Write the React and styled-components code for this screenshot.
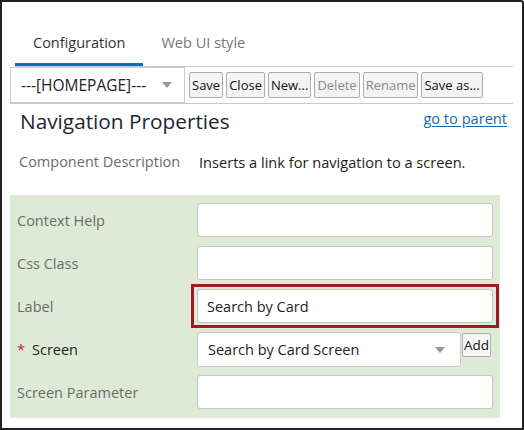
import React from 'react';
import styled, { createGlobalStyle } from 'styled-components';

const GlobalStyle = createGlobalStyle`
  html, body {
    margin: 0;
    padding: 0;
    background: #fff;
  }
  body {
    font-family: "Open Sans", "Noto Sans", sans-serif;
    color: #222;
  }
  * {
    box-sizing: border-box;
  }
`;

const Frame = styled.div`
  width: 524px;
  height: 430px;
  border: 2px solid #222;
  border-top-right-radius: 3px;
  padding: 20px 9px 0 8px;
  background: #fff;
  overflow: hidden;
`;

const TabBar = styled.div`
  display: flex;
  margin-left: 5px;
  border-bottom: 1px solid #c8c8c8;
`;

const Tab = styled.div`
  padding: 11px 18px 10px;
  line-height: 20px;
  font-size: 14.5px;
  color: ${(p) => (p.$active ? '#333' : '#777')};
  border-bottom: 3px solid ${(p) => (p.$active ? '#0a6eb4' : 'transparent')};
`;

const Toolbar = styled.div`
  display: flex;
  align-items: center;
  gap: 3px;
  height: 37px;
  border-bottom: 1px solid #c8c8c8;
`;

const Arrow = styled.span`
  width: 0;
  height: 0;
  border-left: 5px solid transparent;
  border-right: 5px solid transparent;
  border-top: 6px solid #999;
`;

const Select = styled.div`
  display: flex;
  align-items: center;
  justify-content: space-between;
  width: ${(p) => p.$width}px;
  height: ${(p) => p.$height}px;
  padding: 0 ${(p) => p.$padRight}px 0 10px;
  border: 1px solid #ccc;
  border-radius: ${(p) => p.$radius}px;
  background: #fff;
  font-size: ${(p) => p.$fontSize}px;
  color: #222;
  margin-right: ${(p) => p.$gap}px;
`;

const ToolButton = styled.button`
  height: 26px;
  padding: 0 2px;
  font-family: "Open Sans", "Noto Sans", sans-serif;
  font-size: 13px;
  color: ${(p) => (p.disabled ? '#8a8a8a' : '#111')};
  background: #f3f3f3;
  border: 1px solid #adadad;
  border-radius: 2px;
`;

const HeadingRow = styled.div`
  display: flex;
  justify-content: space-between;
  align-items: flex-start;
  padding: 3px 6px 0 10px;
  height: 44px;
`;

const Heading = styled.h1`
  margin: 0;
  font-size: 20.8px;
  font-weight: 400;
  line-height: 28px;
  color: #1c2733;
`;

const ParentLink = styled.a`
  margin-top: 1px;
  font-size: 14.6px;
  color: #0a6eb4;
  text-decoration: underline;
  text-underline-offset: 2px;
`;

const DescRow = styled.div`
  display: grid;
  grid-template-columns: 180px 1fr;
  padding: 3px 0 0 9px;
  height: 47px;
  font-size: 14.5px;
  line-height: 22px;
`;

const DescLabel = styled.span`
  color: #6b6b6b;
`;

const DescValue = styled.span`
  color: #222;
  font-size: 14.6px;
`;

const Panel = styled.div`
  width: 490px;
  height: 223px;
  background: #dfead6;
  padding: 8px 7px;
  display: flex;
  flex-direction: column;
  gap: 9px;
`;

const FieldRow = styled.div`
  display: grid;
  grid-template-columns: 180px 296px;
  align-items: center;
  height: 34px;
`;

const FieldLabel = styled.span`
  font-size: 14.5px;
  color: ${(p) => (p.$required ? '#222' : '#6b6b6b')};
  display: flex;
  align-items: center;
`;

const Star = styled.span`
  color: #c0282d;
  margin-right: 7px;
`;

const Input = styled.div`
  height: 34px;
  border: 1px solid #c4c4c4;
  border-radius: 3px;
  background: #fff;
  padding: 0 9px;
  display: flex;
  align-items: center;
  font-size: 14.5px;
  color: #222;
`;

const Highlight = styled.div`
  position: relative;
  &::after {
    content: '';
    position: absolute;
    top: -5px;
    bottom: -5px;
    left: -6px;
    right: -6px;
    border: 3px solid #9b1c22;
    pointer-events: none;
  }
`;

const Combo = styled.div`
  display: flex;
  align-items: flex-start;
`;

const AddButton = styled(ToolButton)`
  height: 24px;
  margin-top: 1px;
  padding: 0 1px;
  font-size: 13.5px;
  background: #f6f6f6;
`;

const fields = [
  { label: 'Context Help', value: '' },
  { label: 'Css Class', value: '' },
  { label: 'Label', value: 'Search by Card', highlight: true },
  { label: 'Screen', value: 'Search by Card Screen', required: true, select: true },
  { label: 'Screen Parameter', value: '' },
];

const buttons = [
  { text: 'Save' },
  { text: 'Close' },
  { text: 'New...' },
  { text: 'Delete', disabled: true },
  { text: 'Rename', disabled: true },
  { text: 'Save as...' },
];

const App = () => {
  const renderControl = (f) => {
    if (f.select) {
      return (
        <Combo>
          <Select $width={264} $height={35} $padRight={15} $radius={3} $gap={1} $fontSize={14.5}>
            <span>{f.value}</span>
            <Arrow />
          </Select>
          <AddButton>Add</AddButton>
        </Combo>
      );
    }
    const input = <Input>{f.value}</Input>;
    return f.highlight ? <Highlight>{input}</Highlight> : input;
  };

  return (
    <>
      <GlobalStyle />
      <Frame>
        <TabBar>
          <Tab $active>Configuration</Tab>
          <Tab>Web UI style</Tab>
        </TabBar>
        <Toolbar>
          <Select $width={175} $height={36} $padRight={12} $radius={0} $gap={1} $fontSize={15.5}>
            <span>---[HOMEPAGE]---</span>
            <Arrow />
          </Select>
          {buttons.map((b) => (
            <ToolButton key={b.text} disabled={b.disabled}>
              {b.text}
            </ToolButton>
          ))}
        </Toolbar>
        <HeadingRow>
          <Heading>Navigation Properties</Heading>
          <ParentLink href="#">go to parent</ParentLink>
        </HeadingRow>
        <DescRow>
          <DescLabel>Component Description</DescLabel>
          <DescValue>Inserts a link for navigation to a screen.</DescValue>
        </DescRow>
        <Panel>
          {fields.map((f) => (
            <FieldRow key={f.label}>
              <FieldLabel $required={f.required}>
                {f.required && <Star>*</Star>}
                {f.label}
              </FieldLabel>
              {renderControl(f)}
            </FieldRow>
          ))}
        </Panel>
      </Frame>
    </>
  );
};

export default App;
